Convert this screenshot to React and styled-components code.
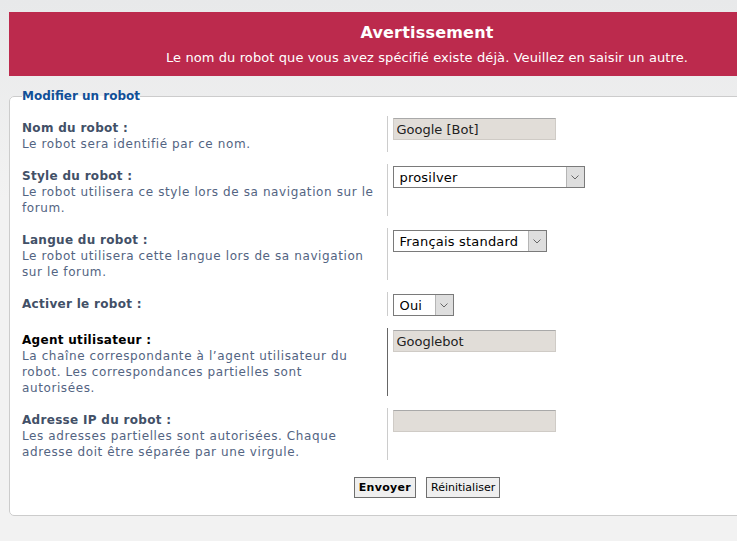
import React from 'react'
import styled, { createGlobalStyle } from 'styled-components'

const GlobalStyle = createGlobalStyle`
    html, body {
        margin: 0;
        padding: 0;
        overflow: hidden;
    }
    body {
        background-color: #efefef;
        font-family: "DejaVu Sans", Verdana, sans-serif;
    }
`;

const Page = styled.div`
    width: 845px;
    min-height: 541px;
    box-sizing: border-box;
    padding: 12px 0 20px 9px;
    background: linear-gradient(#e8e9ea, #f2f2f2 200px);
`;

const ErrorBox = styled.div`
    height: 64px;
    box-sizing: border-box;
    padding-top: 11px;
    background-color: #bc2a4d;
    color: #fff;
    text-align: center;
`;

const ErrorTitle = styled.h3`
    margin: 0;
    font-size: 16px;
    line-height: 20px;
    font-weight: bold;
    letter-spacing: 0.2px;
`;

const ErrorText = styled.p`
    margin: 6px 0 0;
    font-size: 13px;
    line-height: 18px;
    letter-spacing: 0.1px;
`;

const Fieldset = styled.fieldset`
    margin: 12px 0 0;
    padding: 12px 12px 17px;
    border: 1px solid #ccc;
    border-radius: 5px;
    background-color: #fff;
`;

const Legend = styled.legend`
    padding: 0;
    font-size: 12px;
    line-height: 16px;
    font-weight: bold;
    color: #115098;
`;

const Row = styled.dl`
    display: flex;
    margin: 0 0 12px;
`;

const Term = styled.dt`
    flex: none;
    width: 45%;
    box-sizing: border-box;
    margin: 0;
    padding: 4px 12px 0 0;
    font-size: 12px;
    line-height: 16px;
`;

const Label = styled.label`
    display: block;
    font-weight: bold;
    letter-spacing: 0.3px;
    color: ${p => (p.$active ? '#000' : '#425067')};
`;

const Desc = styled.span`
    display: block;
    letter-spacing: 0.6px;
    color: #536482;
`;

const Field = styled.dd`
    margin: 0;
    padding: 2px 0 0 5px;
    border-left: 1px solid ${p => (p.$active ? '#666' : '#ccc')};
`;

const TextInput = styled.input`
    display: block;
    width: 163px;
    height: 22px;
    box-sizing: border-box;
    padding: 0 3px;
    border: 1px solid #cfcbc6;
    border-top-color: #a9a9a9;
    background-color: #e1ddd8;
    font-family: "DejaVu Sans", Verdana, sans-serif;
    font-size: 13px;
    color: #222;
`;

const SelectBox = styled.div`
    display: flex;
    width: ${p => p.$width}px;
    height: 22px;
    box-sizing: border-box;
    border: 1px solid #7a7a7a;
    background-color: #fff;
`;

const Select = styled.select`
    flex: 1;
    min-width: 0;
    appearance: none;
    border: 0;
    outline: none;
    padding: 0 0 0 6px;
    background: transparent;
    font-family: "DejaVu Sans", Verdana, sans-serif;
    font-size: 13px;
    letter-spacing: 0.2px;
    color: #000;
`;

const Arrow = styled.span`
    flex: none;
    width: 17px;
    display: flex;
    align-items: center;
    justify-content: center;
    border-left: 1px solid #b5b5b5;
    background-color: #dedede;
`;

const Buttons = styled.div`
    display: flex;
    justify-content: center;
    gap: 10px;
    margin-top: 17px;
`;

const Button = styled.button`
    height: 21px;
    padding: 0 4px;
    border: 1px solid #6f6f6f;
    background-color: #efefef;
    font-family: "DejaVu Sans", Verdana, sans-serif;
    font-size: 11px;
    font-weight: ${p => (p.$primary ? 'bold' : 'normal')};
    letter-spacing: ${p => (p.$primary ? '0.3px' : '0')};
    color: #000;
    cursor: pointer;
`;

const Chevron = () => (
    <svg width="8" height="5" viewBox="0 0 8 5">
        <path d="M0.5 0.5 L4 4 L7.5 0.5" fill="none" stroke="#666" strokeWidth="1" />
    </svg>
);

const Dropdown = ({ width, value, options }) => (
    <SelectBox $width={width}>
        <Select defaultValue={value}>
            {options.map(o => <option key={o}>{o}</option>)}
        </Select>
        <Arrow><Chevron /></Arrow>
    </SelectBox>
);

const App = () => {
    return (
        <Page>
            <GlobalStyle />
            <ErrorBox>
                <ErrorTitle>Avertissement</ErrorTitle>
                <ErrorText>Le nom du robot que vous avez spécifié existe déjà. Veuillez en saisir un autre.</ErrorText>
            </ErrorBox>

            <Fieldset>
                <Legend>Modifier un robot</Legend>

                <Row>
                    <Term>
                        <Label>Nom du robot :</Label>
                        <Desc>Le robot sera identifié par ce nom.</Desc>
                    </Term>
                    <Field><TextInput defaultValue="Google [Bot]" /></Field>
                </Row>

                <Row>
                    <Term>
                        <Label>Style du robot :</Label>
                        <Desc>Le robot utilisera ce style lors de sa navigation sur le forum.</Desc>
                    </Term>
                    <Field><Dropdown width={192} value="prosilver" options={['prosilver']} /></Field>
                </Row>

                <Row>
                    <Term>
                        <Label>Langue du robot :</Label>
                        <Desc>Le robot utilisera cette langue lors de sa navigation sur le forum.</Desc>
                    </Term>
                    <Field><Dropdown width={154} value="Français standard" options={['Français standard']} /></Field>
                </Row>

                <Row>
                    <Term>
                        <Label>Activer le robot :</Label>
                    </Term>
                    <Field><Dropdown width={61} value="Oui" options={['Oui', 'Non']} /></Field>
                </Row>

                <Row>
                    <Term>
                        <Label $active>Agent utilisateur :</Label>
                        <Desc>La chaîne correspondante à l’agent utilisateur du robot. Les correspondances partielles sont autorisées.</Desc>
                    </Term>
                    <Field $active><TextInput defaultValue="Googlebot" /></Field>
                </Row>

                <Row>
                    <Term>
                        <Label>Adresse IP du robot :</Label>
                        <Desc>Les adresses partielles sont autorisées. Chaque adresse doit être séparée par une virgule.</Desc>
                    </Term>
                    <Field><TextInput defaultValue="" /></Field>
                </Row>

                <Buttons>
                    <Button $primary>Envoyer</Button>
                    <Button>Réinitialiser</Button>
                </Buttons>
            </Fieldset>
        </Page>
    )
}

export default App
